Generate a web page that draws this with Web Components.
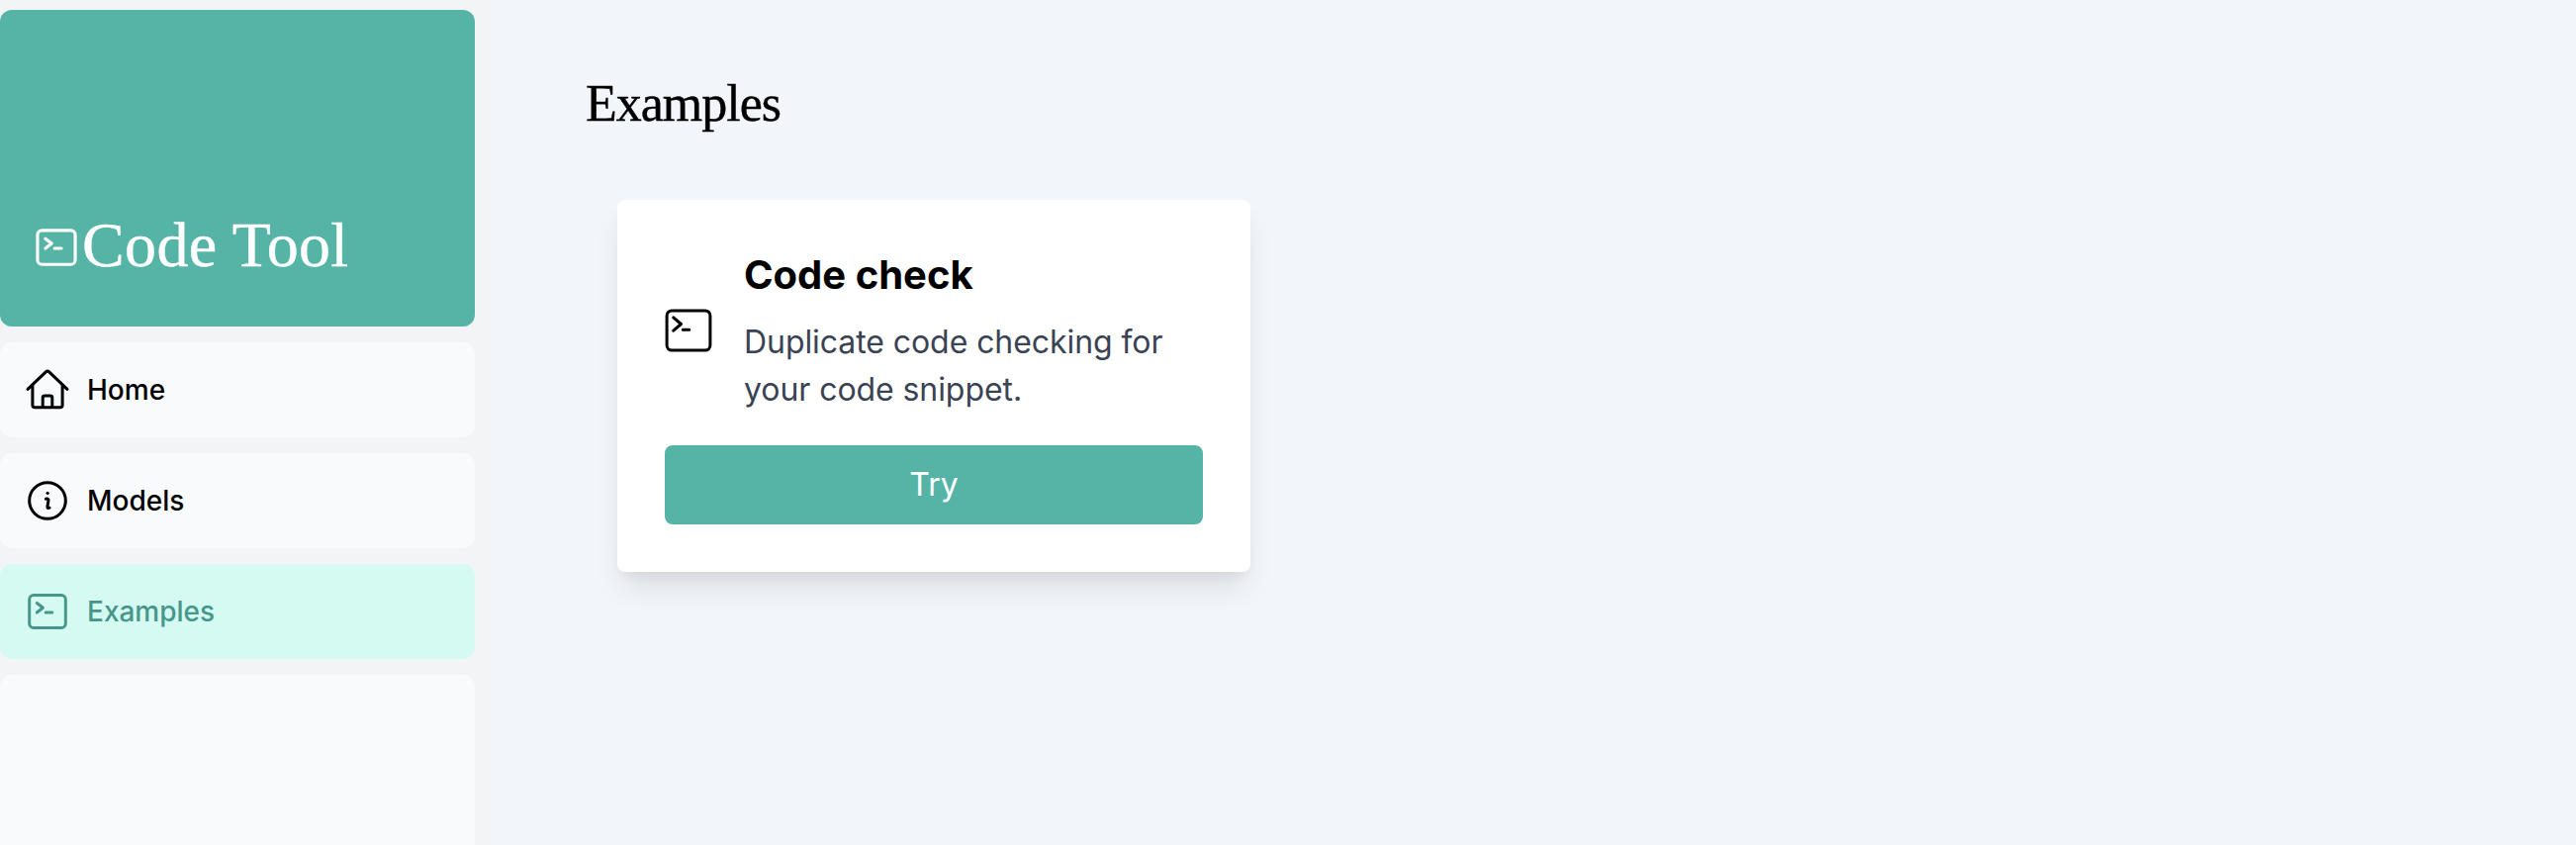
<!DOCTYPE html>
<html lang="en">
<head>
<meta charset="utf-8">
<title>Code Tool</title>
<style>
html,body{margin:0;height:100%;overflow:hidden}
body{font-family:Inter,"Liberation Sans",sans-serif;background:#f2f5fa;color:#000}
</style>
</head>
<body>
<code-app></code-app>
<script>
const define = (name, html) => customElements.define(name, class extends HTMLElement {
  constructor() {
    super();
    const t = document.createElement('template');
    t.innerHTML = html;
    this.attachShadow({ mode: 'open' }).append(t.content.cloneNode(true));
  }
});

const icons = {
  home: '<path d="M4 23.3 22.6 5.6Q24 4.4 25.4 5.6L44 23.3M8.9 19.5V39.5Q8.9 41.8 11.2 41.8H36.8Q39.1 41.8 39.1 39.5V19.5M19.2 41.8V31.9Q19.2 30 21.1 30H26.9Q28.8 30 28.8 31.9V41.8"/>',
  info: '<circle cx="24" cy="24" r="18.3"/><circle cx="24.1" cy="16.3" r="1.6" fill="currentColor" stroke="none"/><path d="M22.4 22.3Q25.2 21.4 25 23.8L24 29.5Q23.6 32.2 26 31.2"/>',
  terminal: '<rect x="5.7" y="7.5" width="36.6" height="33" rx="4.3"/><path d="M13.3 15.5 19.4 20.2 13.3 25M22.2 25H28.8"/>',
  console: '<rect x="2.1" y="3.9" width="43.8" height="40.2" rx="5"/><path d="M8.7 10.9 16.5 17.5 8.7 24.2M18.3 23.3H24.8"/>'
};
class AppIcon extends HTMLElement {
  constructor() {
    super();
    this.attachShadow({ mode: 'open' });
  }
  connectedCallback() {
    this.shadowRoot.innerHTML = `<style>:host{display:block;width:48px;height:48px;flex:none}svg{display:block;width:100%;height:100%;fill:none;stroke:currentColor;stroke-width:3;stroke-linecap:round;stroke-linejoin:round}</style><svg viewBox="0 0 48 48">${icons[this.getAttribute('name')]}</svg>`;
  }
}
customElements.define('app-icon', AppIcon);

define('brand-banner', `<style>
:host{display:flex;align-items:flex-end;box-sizing:border-box;height:320px;padding:0 32px 40px;border-radius:12px;background:#56b4a7;color:#fff;font:64px/80px "Liberation Serif",serif}
app-icon{width:50px;height:50px;margin-bottom:15px}
span{margin:0 0 2px 1px;letter-spacing:.35px;white-space:nowrap;-webkit-text-stroke:.4px}
</style><app-icon name="terminal"></app-icon><span><slot></slot></span>`);

define('nav-item', `<style>
:host{display:flex;align-items:center;gap:16px;box-sizing:border-box;height:96px;padding:0 24px;border-radius:12px;background:#f9fafc;font-size:28px;line-height:40px;font-weight:500}
:host([active]){background:#d5faf1;color:#46968a}
</style><slot name="icon"></slot><span><slot></slot></span>`);

define('side-bar', `<style>
:host{display:flex;flex-direction:column;gap:16px;box-sizing:border-box;width:496px;height:100%;padding:10px 16px 0 0;background:#f3f4f6}
.rest{flex:1;border-radius:12px 12px 0 0;background:#f9fafc}
</style><slot></slot><div class="rest"></div>`);

define('example-card', `<style>
:host{display:block;box-sizing:border-box;width:640px;height:376px;padding:48px;border-radius:8px;background:#fff;box-shadow:0 20px 30px -6px rgba(0,0,0,.1),0 8px 12px -4px rgba(0,0,0,.05)}
.row{display:flex;align-items:center;gap:32px;height:168px}
h2{margin:0 0 16px;font-size:40px;line-height:56px;font-weight:700}
p{margin:0;font-size:32px;line-height:48px;letter-spacing:-.07px;color:#3a4354}
button{display:block;width:100%;height:80px;margin-top:32px;padding:0;border:0;border-radius:8px;background:#56b4a7;color:#fff;font:400 32px/48px Inter,"Liberation Sans",sans-serif}
</style><div class="row"><app-icon name="console"></app-icon><div><h2><slot name="title"></slot></h2><p><slot></slot></p></div></div><button><slot name="action"></slot></button>`);

define('main-panel', `<style>
:host{display:block;flex:1;padding:69px 96px 0}
h1{margin:0 0 1px;font:52px/72px "Liberation Serif",serif;letter-spacing:-1px;-webkit-text-stroke:.4px}
.cards{display:flex;padding:60px 32px}
</style><h1><slot name="heading"></slot></h1><div class="cards"><slot></slot></div>`);

define('code-app', `<style>
:host{display:flex;width:100vw;height:100vh}
</style>
<side-bar>
<brand-banner>Code Tool</brand-banner>
<nav-item><app-icon slot="icon" name="home"></app-icon>Home</nav-item>
<nav-item><app-icon slot="icon" name="info"></app-icon>Models</nav-item>
<nav-item active><app-icon slot="icon" name="terminal"></app-icon>Examples</nav-item>
</side-bar>
<main-panel><span slot="heading">Examples</span>
<example-card><span slot="title">Code check</span>Duplicate code checking for<br>your code snippet.<span slot="action">Try</span></example-card>
</main-panel>`);
</script>
</body>
</html>
